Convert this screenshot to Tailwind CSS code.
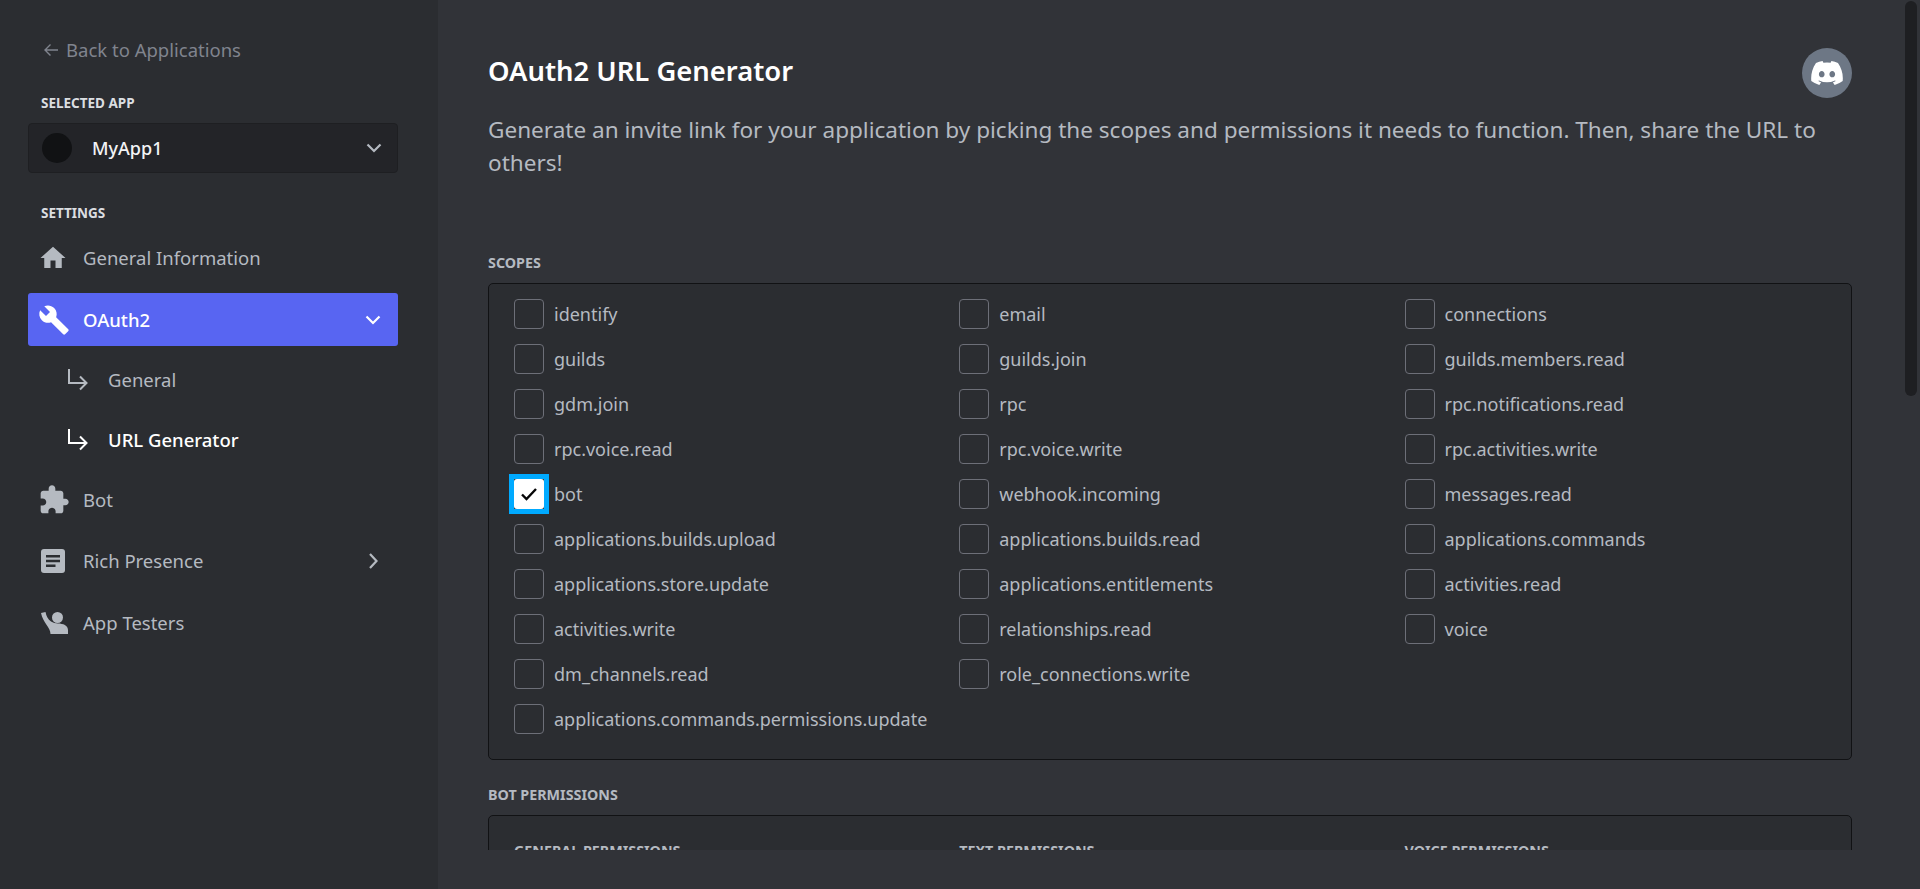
<!DOCTYPE html>
<html lang="en">
<head>
<meta charset="UTF-8">
<title>OAuth2 URL Generator</title>
<script src="https://cdn.jsdelivr.net/npm/@tailwindcss/browser@4"></script>
</head>
<body class="h-screen overflow-hidden bg-[#313338] font-['Noto_Sans',sans-serif]">
<div class="flex h-[889px]">
  <!-- sidebar -->
  <aside class="w-[438px] shrink-0 bg-[#2b2d31] pl-[28px] pr-[40px] pt-[37px]">
    <a class="flex h-[26px] items-center gap-[7px] pl-[15px] text-[18.5px] text-[#80848e]">
      <svg class="h-[16px] w-[16px]" viewBox="0 0 16 16" fill="none" stroke="#80848e" stroke-width="1.4"><path d="M15 8H2M7.5 2.500 2 8l5.500 5.500"/></svg>
      Back to Applications
    </a>
    <div class="mt-[32px] pl-[13px] text-[13.5px] font-bold leading-[16px] text-[#dbdee1]">SELECTED APP</div>
    <div class="mt-[12px] flex h-[50px] items-center rounded-[4px] border border-[#1e1f22] bg-[#232428] pl-[13px] pr-[15px]">
      <span class="h-[30px] w-[30px] rounded-full bg-[#111214]"></span>
      <span class="ml-[20px] flex-1 text-[18px] font-medium text-[#f2f3f5]">MyApp1</span>
      <svg class="h-[16px] w-[16px]" viewBox="0 0 16 16" fill="none" stroke="#b5bac1" stroke-width="2.200"><path d="m1.500 4.500 6.500 6.500 6.500-6.500"/></svg>
    </div>
    <div class="mt-[32px] pl-[13px] text-[13.5px] font-bold leading-[16px] text-[#dbdee1]">SETTINGS</div>
    <nav class="mt-[11px] flex flex-col gap-[8px]">
      <a class="flex h-[53px] items-center pb-[2px] pl-[12px] text-[18.5px] text-[#b5bac1]">
        <svg class="h-[30px] w-[30px] -ml-[2px]" viewBox="0 0 24 24" fill="#b5bac1"><path d="M10 20v-6h4v6h5v-8h3L12 3 2 12h3v8z"/></svg>
        <span class="ml-[15px]">General Information</span>
      </a>
      <a class="flex h-[53px] items-center rounded-[3px] bg-[#5865f2] pl-[10px] pr-[17px] text-[18.5px] font-medium text-white">
        <svg class="h-[32px] w-[32px]" viewBox="0 0 24 24" fill="#fff"><path d="M22.700 19 13.600 9.900c.9-2.300.4-5-1.500-6.900-2-2-5-2.400-7.400-1.300L9 6 6 9 1.600 4.700C.4 7.100.9 10.100 2.900 12.100c1.900 1.900 4.600 2.400 6.900 1.500l9.100 9.100c.4.400 1 .4 1.400 0l2.300-2.300c.5-.4.500-1.100.100-1.400z"/></svg>
        <span class="ml-[13px] flex-1">OAuth2</span>
        <svg class="h-[16px] w-[16px]" viewBox="0 0 16 16" fill="none" stroke="#fff" stroke-width="2.200"><path d="m1.500 4.500 6.500 6.500 6.500-6.500"/></svg>
      </a>
      <a class="flex h-[52px] items-center pl-[40px] text-[18.5px] text-[#b5bac1]">
        <svg class="h-[22px] w-[20px]" viewBox="0 0 20 22" fill="none" stroke="#b5bac1" stroke-width="2"><path d="M1 0v14h17M12 7.500 18.500 14 12 20.500"/></svg>
        <span class="ml-[20px]">General</span>
      </a>
      <a class="flex h-[52px] items-center pl-[40px] text-[18.5px] font-medium text-white">
        <svg class="h-[22px] w-[20px]" viewBox="0 0 20 22" fill="none" stroke="#fff" stroke-width="2"><path d="M1 0v14h17M12 7.500 18.500 14 12 20.500"/></svg>
        <span class="ml-[20px]">URL Generator</span>
      </a>
      <a class="flex h-[53px] items-center pb-[2px] pl-[10px] text-[18.5px] text-[#b5bac1]">
        <svg class="h-[32px] w-[32px]" viewBox="0 0 24 24" fill="#b5bac1"><path d="M20.500 11H19V7c0-1.100-.9-2-2-2h-4V3.500C13 2.100 11.900 1 10.500 1S8 2.100 8 3.500V5H4c-1.100 0-2 .9-2 2v3.800h1.500c1.500 0 2.700 1.200 2.700 2.700S5 16.200 3.500 16.200H2V20c0 1.100.9 2 2 2h3.800v-1.500c0-1.500 1.200-2.700 2.700-2.700s2.700 1.200 2.700 2.700V22H17c1.100 0 2-.9 2-2v-4h1.500c1.400 0 2.500-1.100 2.500-2.500S21.900 11 20.500 11z"/></svg>
        <span class="ml-[13px]">Bot</span>
      </a>
      <a class="flex h-[53px] items-center pb-[2px] pl-[13px] pr-[16px] text-[18.5px] text-[#b5bac1]">
        <svg class="h-[24px] w-[24px]" viewBox="0 0 24 24"><rect width="24" height="24" rx="3" fill="#b5bac1"/><path d="M5 6h14v2.500H5zM5 10.700h14v2.500H5zM5 15.400h9.500v2.500H5z" fill="#2b2d31"/></svg>
        <span class="ml-[18px] flex-1">Rich Presence</span>
        <svg class="h-[16px] w-[16px]" viewBox="0 0 16 16" fill="none" stroke="#b5bac1" stroke-width="2.200"><path d="m4 1 6.500 7-6.500 7"/></svg>
      </a>
      <a class="flex h-[53px] items-center pl-[13px] text-[18.5px] text-[#b5bac1]">
        <svg class="h-[22px] w-[27px]" viewBox="0 0 27 22" fill="#b5bac1"><circle cx="16.500" cy="5.500" r="5.500"/><path d="M0 1 4.500 0c.8 4 2.500 7.500 5.500 9.500 2 1.300 4.500 2 7 2 5 0 10 2 10 6.500v4H9.500C9.500 15 2 11 0 1z"/></svg>
        <span class="ml-[15px]">App Testers</span>
      </a>
    </nav>
  </aside>

  <!-- main -->
  <main class="relative flex-1">
    <div class="h-[850px] overflow-hidden pl-[50px] pr-[68px] pt-[48px]">
      <div class="flex items-start justify-between">
        <h1 class="mt-[3px] text-[27.4px] font-semibold leading-[40px] text-white">OAuth2 URL Generator</h1>
        <span class="flex h-[50px] w-[50px] items-center justify-center rounded-full bg-[#6d7785]">
          <svg class="h-[24px] w-[32px]" viewBox="0 0 127.140 96.360" fill="#fff"><path d="M107.700,8.070A105.150,105.150,0,0,0,81.470,0a72.060,72.060,0,0,0-3.360,6.830A97.680,97.680,0,0,0,49,6.830,72.370,72.370,0,0,0,45.640,0,105.890,105.890,0,0,0,19.390,8.090C2.790,32.650-1.710,56.600.54,80.210h0A105.730,105.730,0,0,0,32.710,96.360,77.700,77.700,0,0,0,39.600,85.250a68.420,68.420,0,0,1-10.850-5.180c.91-.66,1.800-1.340,2.660-2a75.570,75.570,0,0,0,64.320,0c.87.71,1.760,1.390,2.660,2a68.680,68.680,0,0,1-10.870,5.190,77,77,0,0,0,6.890,11.100A105.250,105.250,0,0,0,126.600,80.220h0C129.240,52.840,122.090,29.110,107.700,8.070ZM42.450,65.690C36.180,65.690,31,60,31,53s5-12.740,11.430-12.740S54,46,53.890,53,48.840,65.690,42.450,65.690Zm42.240,0C78.410,65.690,73.250,60,73.250,53s5-12.740,11.440-12.740S96.230,46,96.120,53,91.080,65.690,84.690,65.690Z"/></svg>
        </span>
      </div>
      <p class="mt-[15px] text-[22.55px] leading-[33px] text-[#b5bac1]">Generate an invite link for your application by picking the scopes and permissions it needs to function. Then, share the URL to others!</p>

      <div class="mt-[76px] text-[14.3px] font-bold leading-[16px] text-[#b5bac1]">SCOPES</div>
      <div class="mt-[12px] rounded-[5px] border border-[#111214] bg-[#2b2d31] pb-[25px] pl-[25px] pt-[15px]">
        <div class="grid grid-cols-[repeat(3,445.25px)] gap-y-[15px] text-[18px] leading-[30px] text-[#b5bac1]">
          <label class="flex items-center gap-[10px]"><span class="h-[30px] w-[30px] rounded-[4px] border border-[#6d6f78]"></span>identify</label>
          <label class="flex items-center gap-[10px]"><span class="h-[30px] w-[30px] rounded-[4px] border border-[#6d6f78]"></span>email</label>
          <label class="flex items-center gap-[10px]"><span class="h-[30px] w-[30px] rounded-[4px] border border-[#6d6f78]"></span>connections</label>
          <label class="flex items-center gap-[10px]"><span class="h-[30px] w-[30px] rounded-[4px] border border-[#6d6f78]"></span>guilds</label>
          <label class="flex items-center gap-[10px]"><span class="h-[30px] w-[30px] rounded-[4px] border border-[#6d6f78]"></span>guilds.join</label>
          <label class="flex items-center gap-[10px]"><span class="h-[30px] w-[30px] rounded-[4px] border border-[#6d6f78]"></span>guilds.members.read</label>
          <label class="flex items-center gap-[10px]"><span class="h-[30px] w-[30px] rounded-[4px] border border-[#6d6f78]"></span>gdm.join</label>
          <label class="flex items-center gap-[10px]"><span class="h-[30px] w-[30px] rounded-[4px] border border-[#6d6f78]"></span>rpc</label>
          <label class="flex items-center gap-[10px]"><span class="h-[30px] w-[30px] rounded-[4px] border border-[#6d6f78]"></span>rpc.notifications.read</label>
          <label class="flex items-center gap-[10px]"><span class="h-[30px] w-[30px] rounded-[4px] border border-[#6d6f78]"></span>rpc.voice.read</label>
          <label class="flex items-center gap-[10px]"><span class="h-[30px] w-[30px] rounded-[4px] border border-[#6d6f78]"></span>rpc.voice.write</label>
          <label class="flex items-center gap-[10px]"><span class="h-[30px] w-[30px] rounded-[4px] border border-[#6d6f78]"></span>rpc.activities.write</label>
          <label class="flex items-center gap-[10px]">
            <span class="-m-[5px] mr-[-5px] box-border flex h-[40px] w-[40px] border-[5px] border-[#00aaff] bg-[#2b2d31]">
              <span class="flex flex-1 items-center justify-center rounded-[3px] bg-white">
                <svg class="h-[16px] w-[18px]" viewBox="0 0 18 16" fill="none" stroke="#060607" stroke-width="2.400"><path d="m2 8.500 4.500 4.500L16 3"/></svg>
              </span>
            </span>bot</label>
          <label class="flex items-center gap-[10px]"><span class="h-[30px] w-[30px] rounded-[4px] border border-[#6d6f78]"></span>webhook.incoming</label>
          <label class="flex items-center gap-[10px]"><span class="h-[30px] w-[30px] rounded-[4px] border border-[#6d6f78]"></span>messages.read</label>
          <label class="flex items-center gap-[10px]"><span class="h-[30px] w-[30px] rounded-[4px] border border-[#6d6f78]"></span>applications.builds.upload</label>
          <label class="flex items-center gap-[10px]"><span class="h-[30px] w-[30px] rounded-[4px] border border-[#6d6f78]"></span>applications.builds.read</label>
          <label class="flex items-center gap-[10px]"><span class="h-[30px] w-[30px] rounded-[4px] border border-[#6d6f78]"></span>applications.commands</label>
          <label class="flex items-center gap-[10px]"><span class="h-[30px] w-[30px] rounded-[4px] border border-[#6d6f78]"></span>applications.store.update</label>
          <label class="flex items-center gap-[10px]"><span class="h-[30px] w-[30px] rounded-[4px] border border-[#6d6f78]"></span>applications.entitlements</label>
          <label class="flex items-center gap-[10px]"><span class="h-[30px] w-[30px] rounded-[4px] border border-[#6d6f78]"></span>activities.read</label>
          <label class="flex items-center gap-[10px]"><span class="h-[30px] w-[30px] rounded-[4px] border border-[#6d6f78]"></span>activities.write</label>
          <label class="flex items-center gap-[10px]"><span class="h-[30px] w-[30px] rounded-[4px] border border-[#6d6f78]"></span>relationships.read</label>
          <label class="flex items-center gap-[10px]"><span class="h-[30px] w-[30px] rounded-[4px] border border-[#6d6f78]"></span>voice</label>
          <label class="flex items-center gap-[10px]"><span class="h-[30px] w-[30px] rounded-[4px] border border-[#6d6f78]"></span>dm_channels.read</label>
          <label class="col-span-2 flex items-center gap-[10px]"><span class="h-[30px] w-[30px] rounded-[4px] border border-[#6d6f78]"></span>role_connections.write</label>
          <label class="col-span-3 flex items-center gap-[10px]"><span class="h-[30px] w-[30px] rounded-[4px] border border-[#6d6f78]"></span>applications.commands.permissions.update</label>
        </div>
      </div>

      <div class="mt-[27px] text-[14.3px] font-bold leading-[16px] text-[#b5bac1]">BOT PERMISSIONS</div>
      <div class="mt-[12px] h-[300px] rounded-[5px] border border-[#111214] bg-[#2b2d31] pl-[25px] pt-[27px]">
        <div class="grid grid-cols-[repeat(3,445.25px)] text-[14.3px] font-bold leading-[16px] text-[#b5bac1]">
          <div>GENERAL PERMISSIONS</div>
          <div>TEXT PERMISSIONS</div>
          <div>VOICE PERMISSIONS</div>
        </div>
      </div>
    </div>
    <div class="absolute right-[3px] top-[1px] h-[395px] w-[12px] rounded-full bg-[#1e1f22]"></div>
  </main>
</div>
</body>
</html>
